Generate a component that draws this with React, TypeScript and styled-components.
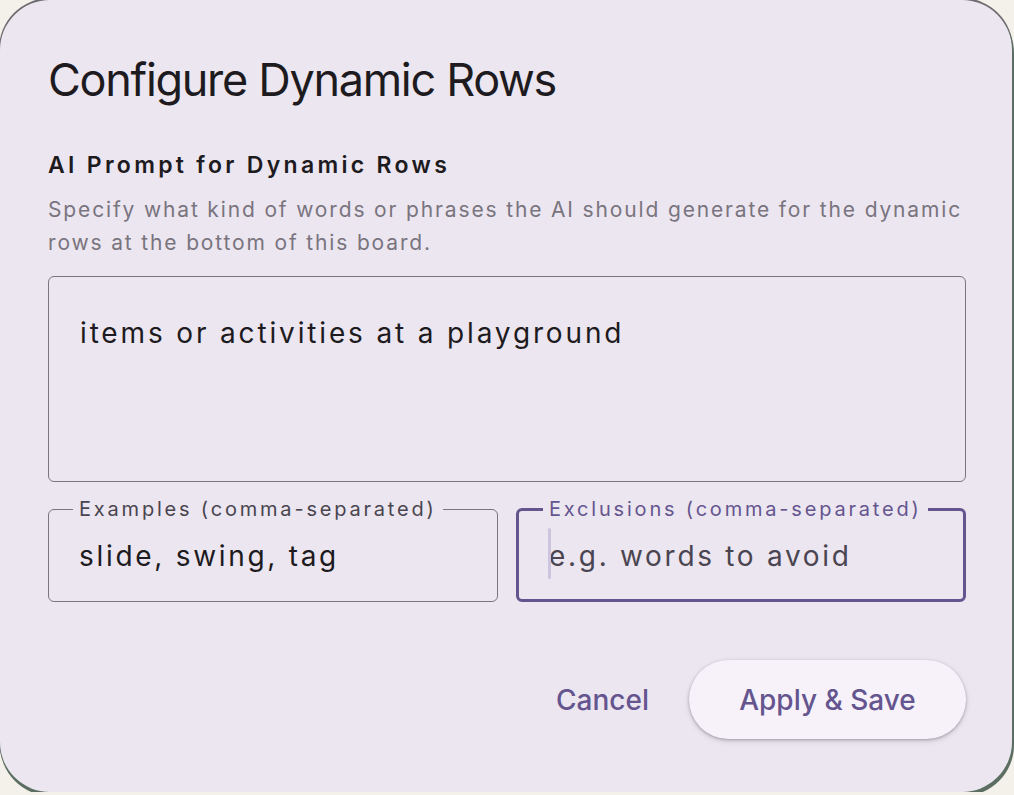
import React from "react";
import styled, { createGlobalStyle } from "styled-components";

const GlobalStyle = createGlobalStyle`
  html, body {
    margin: 0;
    padding: 0;
    background: #f4f0ea;
    overflow: hidden;
  }
  body {
    font-family: Inter, Roboto, "Noto Sans", sans-serif;
  }
`;

const Dialog = styled.div`
  box-sizing: border-box;
  width: 1012px;
  height: 792px;
  border-radius: 50px;
  background: #ece6f0;
  box-shadow: 1px 3px 0 1px #5b6e61, 0 -1px 0 1px #6c6b70;
  padding: 52px 46px 0 48px;
  display: flex;
  flex-direction: column;
`;

const Title = styled.h1`
  margin: 0;
  font-size: 45px;
  line-height: 56px;
  font-weight: 400;
  letter-spacing: -1.3px;
  color: #1d1b20;
`;

const SectionTitle = styled.h2`
  margin: 43px 0 0;
  font-size: 23px;
  line-height: 28px;
  font-weight: 600;
  letter-spacing: 3.3px;
  color: #1d1b20;
`;

const Hint = styled.p`
  margin: 14px 0 0;
  font-size: 21px;
  line-height: 33px;
  letter-spacing: 1.85px;
  color: #79747e;
`;

const Prompt = styled.textarea`
  box-sizing: border-box;
  margin-top: 17px;
  width: 100%;
  height: 206px;
  padding: 38px 31px;
  border: 1.5px solid #79747e;
  border-radius: 6px;
  background: transparent;
  resize: none;
  outline: none;
  font-family: inherit;
  font-size: 28px;
  line-height: 36px;
  letter-spacing: 2.85px;
  color: #1d1b20;
`;

const FieldRow = styled.div`
  margin-top: 17px;
  display: grid;
  grid-template-columns: 1fr 1fr;
  gap: 18px;
`;

const Field = styled.fieldset<{ $focused?: boolean }>`
  position: relative;
  box-sizing: border-box;
  margin: 0;
  height: 103px;
  padding: 0 24px;
  border: ${(p) => (p.$focused ? "3px solid #65558f" : "1.5px solid #79747e")};
  border-radius: 6px;
  min-width: 0;
`;

const Legend = styled.legend<{ $focused?: boolean }>`
  padding: 0 6px;
  font-size: 20px;
  line-height: 20px;
  letter-spacing: 2.8px;
  color: ${(p) => (p.$focused ? "#65558f" : "#49454f")};
`;

const FieldInput = styled.input`
  box-sizing: border-box;
  width: 100%;
  margin-top: 17px;
  padding: 0 6px;
  border: none;
  background: transparent;
  outline: none;
  font-family: inherit;
  font-size: 28px;
  line-height: 40px;
  letter-spacing: 2.7px;
  color: #1d1b20;
  caret-color: transparent;

  &::placeholder {
    color: #4a4550;
  }
`;

const Caret = styled.span`
  position: absolute;
  left: 29px;
  top: 9px;
  width: 3px;
  height: 51px;
  border-radius: 2px;
  background: #cdc4dd;
`;

const Actions = styled.div`
  margin-top: 58px;
  display: flex;
  justify-content: flex-end;
  align-items: center;
  gap: 40px;
`;

const TextButton = styled.button`
  border: none;
  background: transparent;
  padding: 0;
  font-family: inherit;
  font-size: 28px;
  font-weight: 500;
  color: #65558f;
`;

const FilledButton = styled.button`
  width: 277px;
  height: 79px;
  border: none;
  border-radius: 40px;
  background: #f7f2fa;
  box-shadow: 0 1px 3px rgba(0, 0, 0, 0.25), 0 2px 6px rgba(0, 0, 0, 0.12);
  font-family: inherit;
  font-size: 28px;
  font-weight: 500;
  color: #65558f;
`;

export default function App() {
  return (
    <>
      <GlobalStyle />
      <Dialog>
        <Title>Configure Dynamic Rows</Title>
        <SectionTitle>AI Prompt for Dynamic Rows</SectionTitle>
        <Hint>
          Specify what kind of words or phrases the AI should generate for the dynamic
          rows at the bottom of this board.
        </Hint>
        <Prompt defaultValue="items or activities at a playground" />
        <FieldRow>
          <Field>
            <Legend>Examples (comma-separated)</Legend>
            <FieldInput defaultValue="slide, swing, tag" />
          </Field>
          <Field $focused>
            <Legend $focused>Exclusions (comma-separated)</Legend>
            <FieldInput placeholder="e.g. words to avoid" />
            <Caret />
          </Field>
        </FieldRow>
        <Actions>
          <TextButton>Cancel</TextButton>
          <FilledButton>Apply &amp; Save</FilledButton>
        </Actions>
      </Dialog>
    </>
  );
}
